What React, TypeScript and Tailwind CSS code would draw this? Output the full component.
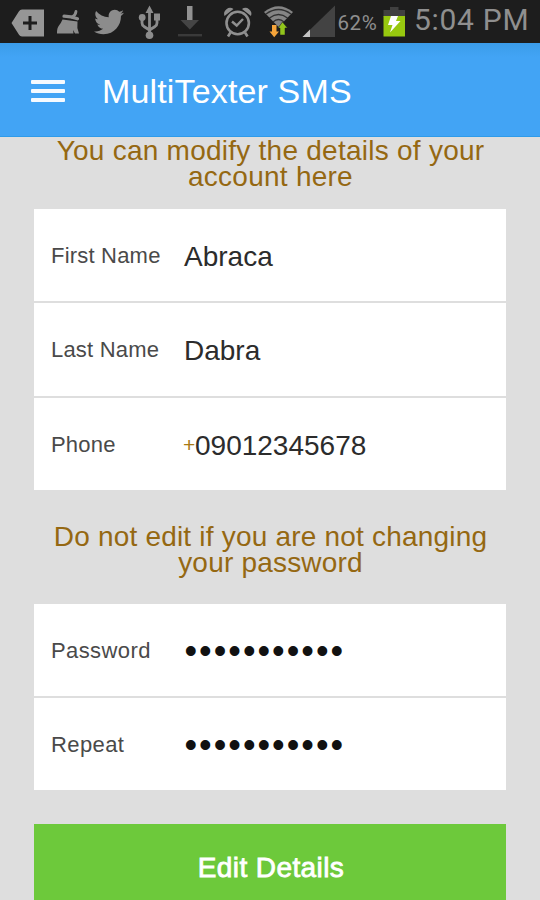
import { FaTwitter } from "react-icons/fa";

const accountFields = [
  { label: "First Name", value: "Abraca" },
  { label: "Last Name", value: "Dabra" },
  { label: "Phone", value: "09012345678", prefix: "+" },
];

const passwordFields = ["Password", "Repeat"];

const StatusBar = () => {
  return (
    <div className="flex h-[43px] items-center overflow-hidden bg-[#1d1d1d] font-['Roboto',sans-serif] text-[#8f8f8f]">
      {/* Tag */}
      <svg className="ml-2.5 h-[43px] w-[36px] shrink-0" viewBox="10 0 36 43">
        <path
          d="M11.5 23 19 11.2Q20 9.5 22 9.5H44V36.5H22Q20 36.5 19 34.8Z"
          fill="#969696"
        />
        <path d="M30 16V30M23 23H37" stroke="#1d1d1d" strokeWidth="3" />
      </svg>
      {/* Cleaner */}
      <svg className="h-[43px] w-[44px] shrink-0" viewBox="46 0 44 43">
        <path
          d="M76 11.5Q75.5 15.5 72 17"
          stroke="#8c8c8c"
          strokeWidth="2.8"
          fill="none"
          strokeLinecap="round"
        />
        <path
          d="M64 16.2Q71 16.5 77.5 18.8"
          stroke="#8c8c8c"
          strokeWidth="3.2"
          fill="none"
          strokeLinecap="round"
        />
        <path
          d="M62.5 19.5 77.5 21.5Q76.5 27.5 79 33.5H75L73 30 73.5 33.5H57Q56.8 28 59 25.5Q61 23 62.5 19.5Z"
          fill="#8c8c8c"
        />
      </svg>
      <FaTwitter className="ml-1 size-[30px] shrink-0 text-[#8c8c8c]" />
      {/* USB */}
      <svg className="ml-[10px] h-[43px] w-[36px] shrink-0" viewBox="134 0 36 43">
        <g fill="none" stroke="#8c8c8c" strokeWidth="2.8">
          <path d="M149.5 12V34" />
          <path d="M142 19V23Q142 25 144 26.5L149.5 30L155 26.5Q157 25 157 23V19" />
        </g>
        <path
          d="M149.5 5.5 153.5 13H145.5ZM154 13.5H160V20.5H154Z"
          fill="#8c8c8c"
        />
        <circle cx="142.2" cy="17.5" r="3.4" fill="#8c8c8c" />
        <circle cx="149.5" cy="35.3" r="3.8" fill="#8c8c8c" />
      </svg>
      {/* Download */}
      <svg className="h-[43px] w-[50px] shrink-0" viewBox="170 0 50 43">
        <path d="M187 6H192.5V20H187Z" fill="#929292" />
        <path d="M180.5 20H199L189.8 29.5Z" fill="#454545" />
        <path d="M178 35.2H202" stroke="#3a3a3a" strokeWidth="2.4" />
      </svg>
      {/* Alarm */}
      <svg className="h-[43px] w-[42px] shrink-0" viewBox="220 0 42 43">
        <g fill="none" stroke="#8f8f8f" strokeWidth="2.6">
          <circle cx="237.7" cy="23" r="11.2" />
          <path d="M232 21.5 236.7 25.5 243 19" strokeWidth="2.4" />
          <path d="M230.5 32.5 228 36.5M245 32.5 247.5 36.5" />
        </g>
        <path
          d="M224.5 16A6 6 0 0 1 233.5 9ZM251 16A6 6 0 0 0 242 9Z"
          fill="#8f8f8f"
        />
      </svg>
      {/* Wi-Fi */}
      <svg className="h-[43px] w-[38px] shrink-0" viewBox="262 0 38 43">
        <path d="M264 12Q278.5 0.5 293 12L278.5 27Z" fill="#858585" />
        <g fill="none" stroke="#303030" strokeWidth="1.3">
          <path d="M266 14Q278.5 5 291 14" />
          <path d="M269.5 18Q278.5 11 287.5 18" />
          <path d="M273 22Q278.5 17 284 22" />
        </g>
        <path
          d="M272 25H276.5V31.5H279L274.2 37.2 269.5 31.5H272Z"
          fill="#f5a43a"
        />
        <path
          d="M282.5 22 287.5 28H285V35H280V28H278Z"
          fill="#92c51c"
          stroke="#1d1d1d"
          strokeWidth="0.5"
        />
      </svg>
      {/* Signal */}
      <svg className="h-[43px] w-[36px] shrink-0" viewBox="300 0 36 43">
        <path d="M302.5 37 335 5.5V37Z" fill="#434343" />
        <path d="M302.5 37 310 29.5V37Z" fill="#c4c4c4" />
      </svg>
      <span className="ml-[1.5px] mt-[3px] w-[43.5px] shrink-0 text-[20.5px] leading-6 tracking-[0.6px]">
        62%
      </span>
      {/* Battery */}
      <svg className="h-[43px] w-[33px] shrink-0" viewBox="382 0 33 43">
        <path d="M391 7H399.5V10H406V17H384.5V10H391Z" fill="#404040" />
        <path d="M384.5 16H406V36.5H384.5Z" fill="#97c80f" />
        <path
          d="M392 16H399L397 21H401.5L391 32.5 393.5 25H389Z"
          fill="#fff"
        />
      </svg>
      <span className="-mt-[3px] shrink-0 whitespace-nowrap text-[30px] leading-9 tracking-[0.7px]">
        5:04 PM
      </span>
    </div>
  );
};

const Header = () => {
  return (
    <header className="flex h-[94px] items-center border-b border-[#2f9be9] bg-linear-to-b from-[#3b9ce9] via-[#42a4f5] via-15% to-[#42a4f5]">
      <button
        type="button"
        aria-label="Menu"
        className="ml-[31px] mt-[3px] flex w-[34px] flex-col gap-[5px]"
      >
        <span className="h-[4px] rounded-[1px] bg-white/95" />
        <span className="h-[4px] rounded-[1px] bg-white/95" />
        <span className="h-[4px] rounded-[1px] bg-white/95" />
      </button>
      <h1 className="ml-[37px] mt-[3px] text-[34px] leading-10 tracking-[0.15px] text-white">
        MultiTexter SMS
      </h1>
    </header>
  );
};

const App = () => {
  return (
    <div className="h-[900px] w-[540px] overflow-hidden bg-[#dedede] font-['Liberation_Sans',Arial,sans-serif]">
      <StatusBar />
      <Header />

      <main className="px-[34px]">
        <p className="pt-px pl-px text-center text-[28px] leading-[26px] tracking-[0.25px] text-[#956812]">
          You can modify the details of your
          <br />
          account here
        </p>

        {/* Account details */}
        <div className="mt-[18.5px] flex flex-col gap-[2px]">
          {accountFields.map((field) => (
            <div
              key={field.label}
              className="flex h-[92.5px] items-center bg-white pt-px pl-[17px]"
            >
              <span className="w-[133px] text-[22px] tracking-[0.2px] text-[#4a4a4a]">
                {field.label}
              </span>
              {field.prefix && (
                <span className="-ml-px w-[12px] text-[21px] text-[#a87a14]">
                  {field.prefix}
                </span>
              )}
              <span className="mt-[3px] text-[28px] text-[#2c2c2c]">
                {field.value}
              </span>
            </div>
          ))}
        </div>

        <p className="mt-[34px] pl-px text-center text-[28px] leading-[26px] tracking-[0.2px] text-[#956812]">
          Do not edit if you are not changing
          <br />
          your password
        </p>

        {/* Password change */}
        <div className="mt-[27.5px] flex flex-col gap-[2px]">
          {passwordFields.map((label) => (
            <div
              key={label}
              className="flex h-[92.4px] items-center bg-white pt-px pl-[17px]"
            >
              <span className="w-[133.5px] text-[22px] tracking-[0.4px] text-[#4a4a4a]">
                {label}
              </span>
              <span className="mt-px text-[36px] leading-none tracking-[2px] text-[#111]">
                •••••••••••
              </span>
            </div>
          ))}
        </div>

        <button
          type="button"
          className="mt-[33.7px] h-[88px] w-full bg-[#6dc93b] pl-[2px] text-[28px] tracking-[0.4px] text-white [-webkit-text-stroke:0.8px_white]"
        >
          Edit Details
        </button>
      </main>
    </div>
  );
};

export default App;
